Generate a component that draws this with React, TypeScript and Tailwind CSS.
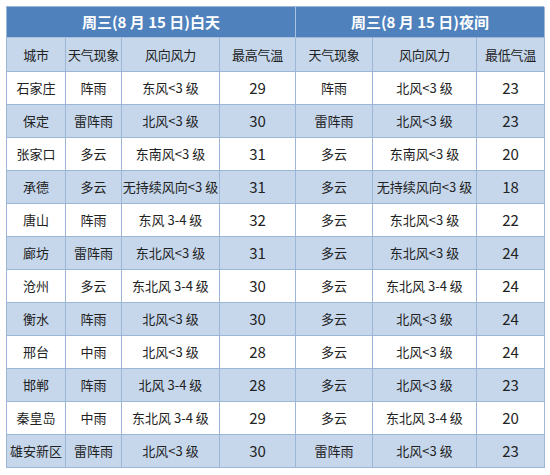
const rows: string[][] = [
  ['石家庄', '阵雨', '东风<3 级', '29', '阵雨', '北风<3 级', '23'],
  ['保定', '雷阵雨', '北风<3 级', '30', '雷阵雨', '北风<3 级', '23'],
  ['张家口', '多云', '东南风<3 级', '31', '多云', '东南风<3 级', '20'],
  ['承德', '多云', '无持续风向<3 级', '31', '多云', '无持续风向<3 级', '18'],
  ['唐山', '阵雨', '东风 3-4 级', '32', '多云', '东北风<3 级', '22'],
  ['廊坊', '雷阵雨', '东北风<3 级', '31', '多云', '东北风<3 级', '24'],
  ['沧州', '多云', '东北风 3-4 级', '30', '多云', '东北风 3-4 级', '24'],
  ['衡水', '阵雨', '北风<3 级', '30', '多云', '北风<3 级', '24'],
  ['邢台', '中雨', '北风<3 级', '28', '多云', '北风<3 级', '24'],
  ['邯郸', '阵雨', '北风 3-4 级', '28', '多云', '北风<3 级', '23'],
  ['秦皇岛', '中雨', '东北风 3-4 级', '29', '多云', '东北风 3-4 级', '20'],
  ['雄安新区', '雷阵雨', '北风<3 级', '30', '雷阵雨', '北风<3 级', '23'],
]

const headers = ['城市', '天气现象', '风向风力', '最高气温', '天气现象', '风向风力', '最低气温']

export default function App() {
  return (
    <div
      className="w-[550px] h-[475px] bg-white pt-[6px] pl-[6px]"
      style={{ fontFamily: '"Noto Sans CJK SC", "Liberation Sans", sans-serif' }}
    >
      <div className="grid grid-cols-[59px_56px_98px_76px_77px_104px_68px] w-[538px] border-l border-t border-[#9db6d8] text-[13px] text-[#222]">
        {/* Title row */}
        <div className="col-span-4 h-[31px] bg-[#4f81bd] border-r border-b border-[#a9c0df] flex items-center justify-center text-white font-bold text-[15px]">
          周三(8 月 15 日)白天
        </div>
        <div className="col-span-3 h-[31px] bg-[#4f81bd] border-r border-b border-[#9db6d8] flex items-center justify-center text-white font-bold text-[15px]">
          周三(8 月 15 日)夜间
        </div>

        {/* Header row */}
        {headers.map((h, i) => (
          <div
            key={'h' + i}
            className="h-[34px] bg-[#c6d7ec] border-r border-b border-[#9db6d8] flex items-center justify-center whitespace-nowrap text-[13px] tracking-[-0.3px]"
          >
            {h}
          </div>
        ))}

        {/* Data rows */}
        {rows.map((row, r) =>
          row.map((cell, c) => (
            <div
              key={r + '-' + c}
              className={
                'h-[33px] border-r border-b border-[#9db6d8] flex items-center justify-center whitespace-nowrap ' +
                (r % 2 === 1 ? 'bg-[#c6d7ec]' : 'bg-white') +
                (c === 3 || c === 6 ? ' text-[15px]' : '')
              }
            >
              {cell}
            </div>
          ))
        )}
      </div>
    </div>
  )
}
